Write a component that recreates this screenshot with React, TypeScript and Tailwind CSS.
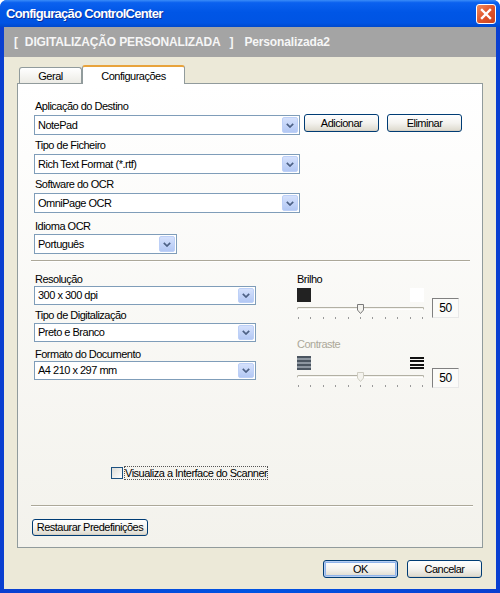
import React from "react";

const Chevron = () => (
  <svg width="8" height="5" viewBox="0 0 8 5">
    <path d="M0.8 0.8 L4 4 L7.2 0.8" fill="none" stroke="#4d6185" strokeWidth="1.7" />
  </svg>
);

function Combo({ value, w, h }: { value: string; w: string; h: string }) {
  return (
    <div className={`${w} ${h} flex-none flex items-stretch border border-[#7f9db9] bg-white`}>
      <div className="flex-1 flex items-center pl-[3px] overflow-hidden whitespace-nowrap">{value}</div>
      <div className="w-[16px] flex-none my-[1px] mr-[1px] flex items-center justify-center rounded-[2px] border border-[#bdd0f7] bg-gradient-to-b from-[#d5e1fc] to-[#b3c8f4]">
        <Chevron />
      </div>
    </div>
  );
}

function XPButton({ label, w, h, def }: { label: string; w: string; h: string; def?: boolean }) {
  return (
    <div
      className={`${w} ${h} flex-none rounded-[3px] border border-[#003c74] bg-gradient-to-b from-white via-[#f4f3ef] to-[#dcd8cc] flex items-center justify-center ${
        def ? "shadow-[inset_0_0_0_1px_#b6cdf1,inset_0_0_0_2px_#8fb3ea]" : "shadow-[inset_0_-1px_0_#d6d0c4]"
      }`}
    >
      {label}
    </div>
  );
}

function Slider({ disabled }: { disabled?: boolean }) {
  return (
    <div className="w-[128px] flex flex-col">
      <div className="h-[14px] relative">
        <div className="absolute left-0 right-[1px] top-[5px] h-[3px] rounded-full border border-[#b2b0a4] border-b-white bg-[#f4f3ee]" />
        <svg
          className="absolute left-[60px] top-[2px]"
          width="7"
          height="10"
          viewBox="0 0 7 10"
        >
          <path
            d="M0.5 0.5 H6.5 V6 L3.5 9.5 L0.5 6 Z"
            fill="#f4f3ee"
            stroke={disabled ? "#cfcdc2" : "#7a7a7a"}
            strokeWidth="1"
          />
        </svg>
      </div>
      <div className="mt-[1px] flex justify-between pl-[1px] pr-[2px]">
        {Array.from({ length: 11 }).map((_, i) => (
          <div key={i} className="w-px h-[2px] bg-[#9a9a9a]" />
        ))}
      </div>
    </div>
  );
}

function ValueBox({ value }: { value: string }) {
  return (
    <div className="w-[27px] h-[20px] flex-none border border-t-[#808080] border-l-[#808080] border-r-[#e8e8e8] border-b-[#e8e8e8] bg-[#fbfbf9] flex items-center justify-center text-[12px]">
      {value}
    </div>
  );
}

export default function App() {
  return (
    <div className="w-[500px] h-[593px] flex flex-col bg-[#0054e3] rounded-t-[7px] overflow-hidden font-['Liberation_Sans',Arial,sans-serif] text-[11px] tracking-[-0.5px] text-black">
      {/* Title bar */}
      <div className="h-[27px] flex-none flex items-center pl-[6px] pr-[4px] bg-[linear-gradient(to_bottom,#3a8cf8_0%,#0b61ef_10%,#0056e6_45%,#0054e3_85%,#0049cc_100%)]">
        <div className="flex-1 text-white font-bold text-[13px] tracking-[-0.7px] [text-shadow:1px_1px_0_#0a2f9a]">
          Configuração ControlCenter
        </div>
        <div className="w-[20px] h-[20px] mt-[1px] rounded-[3px] border border-white bg-gradient-to-br from-[#f08a5d] via-[#e0552b] to-[#c9431f] flex items-center justify-center">
          <svg width="12" height="12" viewBox="0 0 12 12">
            <path d="M2 2 L10 10 M10 2 L2 10" stroke="white" strokeWidth="2.4" strokeLinecap="square" />
          </svg>
        </div>
      </div>

      {/* Body inside frame */}
      <div className="flex-1 flex flex-col px-[4px] pb-[4px] bg-gradient-to-r from-[#0a3fd0] via-[#0054e3] to-[#0a3fd0]">
        {/* Gray header */}
        <div className="h-[30px] flex-none flex items-center pl-[10px] bg-[#a4a4a4] text-[#f6f6f6] font-bold text-[12px] tracking-[-0.15px]">
          <span>[</span>
          <span className="ml-[7px]">DIGITALIZAÇÃO PERSONALIZADA</span>
          <span className="ml-[9px]">]</span>
          <span className="ml-[11px]">Personalizada2</span>
        </div>

        {/* Beige area */}
        <div className="flex-1 flex flex-col bg-[#ece9d8] px-[13px] pt-[8px]">
          {/* Tabs */}
          <div className="flex items-end pl-[2px]">
            <div className="w-[63px] h-[16px] rounded-t-[3px] border border-b-0 border-[#919b9c] bg-gradient-to-b from-white to-[#ecebe5] flex items-center justify-center pt-[1px]">
              Geral
            </div>
            <div className="relative z-10 w-[103px] h-[19px] -mb-[1px] rounded-t-[3px] border border-b-0 border-[#919b9c] border-t-2 border-t-[#e8a33c] bg-white flex items-start justify-center pt-[1px]">
              Configurações
            </div>
          </div>

          {/* Panel */}
          <div className="h-[465px] flex-none border border-[#919b9c] bg-gradient-to-b from-white to-[#f3f2ec] flex flex-col">
            {/* Upper section */}
            <div className="flex flex-col pl-[16px] pt-[16px]">
              <div className="h-[13px] leading-[13px] pl-[1px]">Aplicação do Destino</div>
              <div className="mt-[2px] flex items-start">
                <Combo value="NotePad" w="w-[266px]" h="h-[20px]" />
                <div className="ml-[4px] -mt-[1px]">
                  <XPButton label="Adicionar" w="w-[75px]" h="h-[18px]" />
                </div>
                <div className="ml-[8px] -mt-[1px]">
                  <XPButton label="Eliminar" w="w-[75px]" h="h-[18px]" />
                </div>
              </div>
              <div className="mt-[4px] h-[13px] leading-[13px] pl-[1px]">Tipo de Ficheiro</div>
              <div className="mt-[2px]">
                <Combo value="Rich Text Format (*.rtf)" w="w-[266px]" h="h-[20px]" />
              </div>
              <div className="mt-[4px] h-[13px] leading-[13px] pl-[1px]">Software do OCR</div>
              <div className="mt-[2px]">
                <Combo value="OmniPage OCR" w="w-[266px]" h="h-[20px]" />
              </div>
              <div className="mt-[7px] h-[13px] leading-[13px] pl-[1px]">Idioma OCR</div>
              <div className="mt-[1px]">
                <Combo value="Português" w="w-[143px]" h="h-[20px]" />
              </div>
            </div>

            {/* Separator */}
            <div className="mt-[6px] ml-[13px] mr-[12px] h-[2px] border-t border-[#aca899] border-b border-b-white" />

            {/* Lower section */}
            <div className="flex pl-[16px]">
              {/* Left column */}
              <div className="w-[222px] flex flex-col">
                <div className="mt-[11px] h-[13px] leading-[13px] pl-[1px]">Resolução</div>
                <Combo value="300 x 300 dpi" w="w-[222px]" h="h-[19px]" />
                <div className="mt-[4px] h-[13px] leading-[13px] pl-[1px]">Tipo de Digitalização</div>
                <div className="mt-[1px]">
                  <Combo value="Preto e Branco" w="w-[222px]" h="h-[19px]" />
                </div>
                <div className="mt-[6px] h-[13px] leading-[13px] pl-[1px]">Formato do Documento</div>
                <Combo value="A4 210 x 297 mm" w="w-[222px]" h="h-[19px]" />
              </div>

              {/* Right column */}
              <div className="ml-[41px] flex flex-col">
                <div className="mt-[11px] h-[13px] leading-[13px]">Brilho</div>
                <div className="mt-[2px] flex items-start">
                  <div className="flex flex-col">
                    <div className="w-[128px] flex justify-between">
                      <div className="w-[14px] h-[14px] bg-[#222222]" />
                      <div className="w-[14px] h-[14px] bg-white mr-[1px]" />
                    </div>
                    <Slider />
                  </div>
                  <div className="ml-[7px] mt-[10px]">
                    <ValueBox value="50" />
                  </div>
                </div>

                <div className="mt-[19px] h-[13px] leading-[13px] text-[#aca899]">Contraste</div>
                <div className="mt-[5px] flex items-start">
                  <div className="flex flex-col">
                    <div className="w-[128px] flex justify-between">
                      <div className="w-[14px] h-[14px] flex flex-col">
                        <div className="h-[2px] bg-[#4b5560]" />
                        <div className="h-[2px] bg-[#8d96a0]" />
                        <div className="h-[2px] bg-[#4b5560]" />
                        <div className="h-[2px] bg-[#8d96a0]" />
                        <div className="h-[2px] bg-[#4b5560]" />
                        <div className="h-[2px] bg-[#8d96a0]" />
                        <div className="h-[2px] bg-[#4b5560]" />
                      </div>
                      <div className="w-[14px] h-[14px] mr-[1px] flex flex-col justify-between py-[1px]">
                        <div className="h-[2px] bg-[#111]" />
                        <div className="h-[2px] bg-[#111]" />
                        <div className="h-[2px] bg-[#111]" />
                        <div className="h-[2px] bg-[#111]" />
                      </div>
                    </div>
                    <Slider disabled />
                  </div>
                  <div className="ml-[7px] mt-[12px]">
                    <ValueBox value="50" />
                  </div>
                </div>
              </div>
            </div>

            {/* Checkbox */}
            <div className="mt-[78px] pl-[93px] flex items-center">
              <div className="w-[12px] h-[12px] border border-[#1c5180] bg-gradient-to-br from-[#dcdcd7] to-white" />
              <div className="ml-[1px] h-[14px] flex items-center border border-dotted border-[#555]">
                Visualiza a Interface do Scanner
              </div>
            </div>

            {/* Separator */}
            <div className="mt-[25px] ml-[13px] mr-[9px] h-[2px] border-t border-[#aca899] border-b border-b-white" />

            <div className="mt-[12px] ml-[14px]">
              <XPButton label="Restaurar Predefinições" w="w-[116px]" h="h-[17px]" />
            </div>
          </div>

          {/* Bottom buttons */}
          <div className="mt-[12px] flex justify-end pr-[1px]">
            <XPButton label="OK" w="w-[75px]" h="h-[18px]" def />
            <div className="ml-[9px]">
              <XPButton label="Cancelar" w="w-[75px]" h="h-[18px]" />
            </div>
          </div>
        </div>
      </div>
    </div>
  );
}
